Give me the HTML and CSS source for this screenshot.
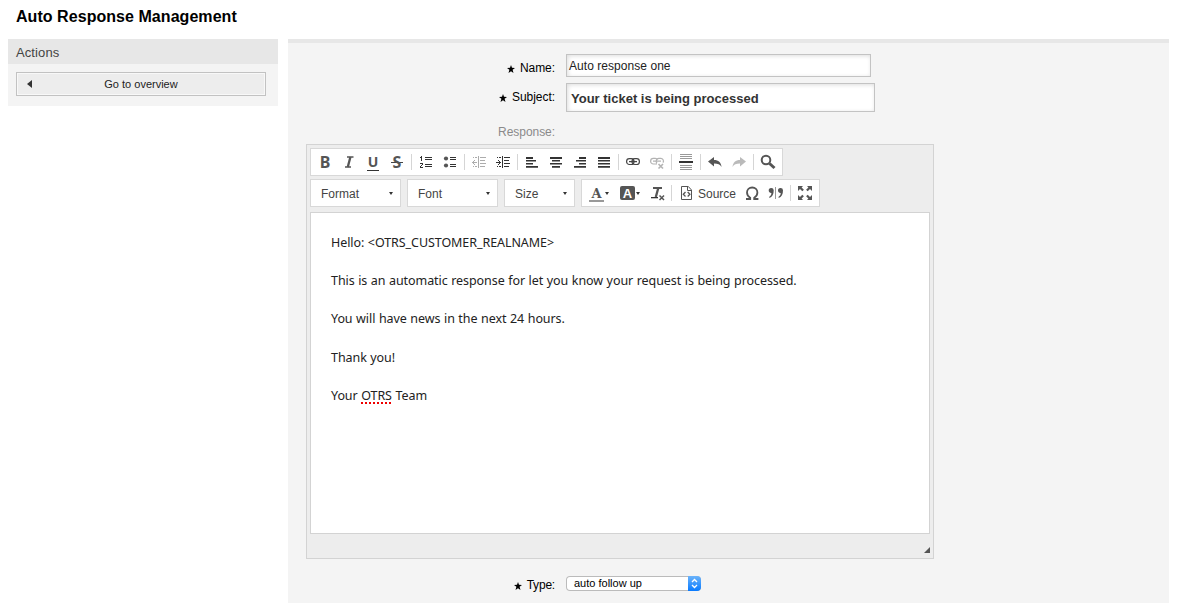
FILE: index.html
```html
<!DOCTYPE html>
<html lang="en">
<head>
<meta charset="utf-8">
<title>Auto Response Management</title>
<link rel="stylesheet" href="styles.css">
</head>
<body>
<h1 class="title"><span>Auto Response Management</span></h1>
<div class="layout">
  <aside class="sidebar">
    <h2 class="sidebar-head">Actions</h2>
    <a class="overview"><svg class="back" viewBox="0 0 5 8"><path d="M5 0v8L0 4z"/></svg><span>Go to overview</span></a>
  </aside>
  <main class="panel">
    <div class="row row-name">
      <label class="label"><svg class="star" viewBox="0 0 8 8"><path d="M4 0l1 2.8L8 3 5.6 4.8 6.5 8 4 6.2 1.5 8l.9-3.2L0 3l3-.2z"/></svg><span>Name:</span></label>
      <div class="input input-name"><span>Auto response one</span></div>
    </div>
    <div class="row row-subject">
      <label class="label"><svg class="star" viewBox="0 0 8 8"><path d="M4 0l1 2.8L8 3 5.6 4.8 6.5 8 4 6.2 1.5 8l.9-3.2L0 3l3-.2z"/></svg><span>Subject:</span></label>
      <div class="input input-subject"><span>Your ticket is being processed</span></div>
    </div>
    <div class="row row-response"><label class="label muted"><span>Response:</span></label></div>

    <div class="editor">
      <div class="toolbar first">
        <div class="group">
          <i class="tool"><span class="glyph">B</span></i>
          <i class="tool"><svg viewBox="0 0 16 16"><path class="s2" d="M6 3h6.500M4 13h6" stroke-width="1.600"/><path class="s2" d="M9.400 3L6.800 13" stroke-width="2.300"/></svg></i>
          <i class="tool"><span class="glyph under">U</span></i>
          <i class="tool"><span class="glyph strike">S</span></i>
          <b class="sep"></b>
          <i class="tool"><svg viewBox="0 0 16 16"><path class="k" d="M7 3h7v1H7zM7 5h7v1H7zM7 10h7v1H7zM7 12h7v1H7zM3 2h1v5H3zM2 3h1v1H2zM2 9h3v1H2zM4 10h1v1H4zM3 11h1v1H3zM2 12h1v1H2zM2 13h3v1H2z"/></svg></i>
          <i class="tool"><svg viewBox="0 0 16 16"><circle class="f" cx="4" cy="4.500" r="2.100"/><circle class="f" cx="4" cy="11.500" r="2.100"/><path class="k" d="M8 3h6v1H8zM8 5h6v1H8zM8 10h6v1H8zM8 12h6v1H8z"/></svg></i>
          <b class="sep"></b>
          <i class="tool off"><svg viewBox="0 0 16 16"><path class="k" d="M7 2h1v12H7zM9 3h6v1H9zM9 6h5v1H9zM9 9h6v1H9zM9 12h5v1H9zM1 8h5v1H1zM2 7h1v3H2zM3 6h1v1H3zM3 10h1v1H3zM2 3h1v1H2zM4 3h2v1H4zM2 12h1v1H2zM4 12h2v1H4z"/></svg></i>
          <i class="tool"><svg viewBox="0 0 16 16"><path class="k" d="M7 2h1v12H7zM9 3h6v1H9zM9 6h5v1H9zM9 9h6v1H9zM9 12h5v1H9zM1 8h5v1H1zM4 7h1v3H4zM3 6h1v1H3zM3 10h1v1H3zM2 3h1v1H2zM4 3h2v1H4zM2 12h1v1H2zM4 12h2v1H4z"/></svg></i>
          <b class="sep"></b>
          <i class="tool"><svg viewBox="0 0 16 16"><path class="k" d="M2 3h7v2H2zM2 6h10v1.500H2zM2 9h7v1.600H2zM2 12h12v1.800H2z"/></svg></i>
          <i class="tool"><svg viewBox="0 0 16 16"><path class="k" d="M2 3h12v2H2zM4 6h8v1.500H4zM2 9h12v1.600H2zM4 12h8v1.800H4z"/></svg></i>
          <i class="tool"><svg viewBox="0 0 16 16"><path class="k" d="M7 3h7v2H7zM4 6h10v1.500H4zM7 9h7v1.600H7zM2 12h12v1.800H2z"/></svg></i>
          <i class="tool"><svg viewBox="0 0 16 16"><path class="k" d="M2 3h12v2H2zM2 6h12v1.500H2zM2 9h12v1.600H2zM2 12h12v1.800H2z"/></svg></i>
          <b class="sep"></b>
          <i class="tool"><svg viewBox="0 0 16 16"><g class="l"><rect x="1.600" y="4.700" width="7.400" height="5.800" rx="2.800"/><rect x="7" y="4.700" width="7.400" height="5.800" rx="2.800"/><path d="M4 7.600h8" stroke-width="1.300"/></g></svg></i>
          <i class="tool off"><svg viewBox="0 0 16 16"><g class="l"><path d="M8 10H4.400a2.800 2.800 0 010-5.600h1.800a2.800 2.800 0 012.400 1.400M14 8.600a2.700 2.700 0 00-2.400-4.200H9.800A2.800 2.800 0 008 9.200M4 7.200h8"/><path d="M9.500 10l4.500 4.500M14 10l-4.500 4.500" stroke-width="1.600"/></g></svg></i>
          <b class="sep"></b>
          <i class="tool"><svg viewBox="0 0 16 16"><path class="thin" d="M2 0h12v1H2zM2 2h12v1H2zM2 4h12v1H2zM2 11h12v1H2zM2 13h12v1H2zM2 15h12v1H2z"/><path class="k" d="M1 7h14v2H1z"/></svg></i>
          <b class="sep"></b>
          <i class="tool"><svg viewBox="0 0 16 16"><path class="f" d="M1 7.500L7 3v3c4.500 0 7 2.200 7.500 7-1.500-2.600-3.500-3.500-7.500-3.500v3z"/></svg></i>
          <i class="tool off"><svg viewBox="0 0 16 16"><path class="f" d="M15 7.500L9 3v3c-4.500 0-7 2.200-7.500 7 1.500-2.600 3.500-3.500 7.500-3.500v3z"/></svg></i>
          <b class="sep"></b>
          <i class="tool"><svg viewBox="0 0 16 16"><circle class="s2" cx="6" cy="6" r="4.300" stroke-width="2"/><path class="s2" d="M9.500 9.500l5 4.500" stroke-width="3"/></svg></i>
        </div>
      </div>
      <div class="toolbar second">
        <div class="combo"><span>Format</span><em class="arrow"></em></div>
        <div class="combo"><span>Font</span><em class="arrow"></em></div>
        <div class="combo small"><span>Size</span><em class="arrow"></em></div>
        <div class="group">
          <i class="tool menu"><span class="glyph color">A</span><em class="arrow"></em></i>
          <i class="tool menu next"><span class="glyph fill">A</span><em class="arrow"></em></i>
          <i class="tool"><svg viewBox="0 0 16 16"><path class="s2" d="M4 3h9" stroke-width="2"/><path class="s2" d="M9.300 3L6.800 12" stroke-width="2.300"/><path class="k" d="M2 12h7v1.300H2z"/><path class="s2" d="M10.500 10.500l4.500 4.500M15 10.500L10.500 15" stroke-width="1.500"/></svg></i>
          <b class="sep"></b>
          <i class="tool source"><svg viewBox="0 0 16 16"><path class="s2" d="M3.500 1.500h6.800l3.200 3.500v9.500h-10zM9.500 1.500v4h4" stroke-width="1"/><path class="s2" d="M7.500 7L5.300 9.300l2.200 2.200M9.700 7l2.200 2.300-2.200 2.200" stroke-width="1.300"/></svg><span class="drop">Source</span></i>
          <i class="tool"><svg viewBox="0 0 16 16"><path class="s2" d="M2 14h4.200v-1.200C4 11.600 3 9.700 3 7.600 3 4.600 5.200 2.500 8.200 2.500s5.200 2.100 5.200 5.100c0 2.100-1 4-3.200 5.200V14h4.200" stroke-width="1.800"/></svg></i>
          <i class="tool"><svg viewBox="0 0 16 16"><path class="f" d="M.7 5.500a2.500 2.500 0 015-.2C5.800 9.500 4.300 12 1.300 13v-1.200c1.300-.8 2.100-2.100 2.100-3.800C2 8.200.7 7 .7 5.500zM10 5.500a2.500 2.500 0 015-.2c.1 4.200-1.400 6.700-4.400 7.700v-1.200c1.300-.8 2.100-2.100 2.100-3.800C11.300 8.200 10 7 10 5.500z"/><path class="thin" d="M7 2h1v12H7z"/></svg></i>
          <b class="sep"></b>
          <i class="tool"><svg viewBox="0 0 16 16"><path class="f" d="M1 1h5L4.600 2.400l2.300 2.300-1.600 1.600L3 4 1 6zM15 1h-5l1.400 1.400-2.300 2.300 1.600 1.600L13 4l2 2zM1 15h5l-1.400-1.400 2.300-2.300-1.600-1.600L3 12l-2-2zM15 15h-5l1.400-1.400-2.300-2.300 1.600-1.600L13 12l2-2z"/></svg></i>
        </div>
      </div>
      <div class="content">
        <p>Hello: &lt;OTRS_CUSTOMER_REALNAME&gt;</p>
        <p>This is an automatic response for let you know your request is being processed.</p>
        <p class="news">You will have news in the next 24 hours.</p>
        <p>Thank you!</p>
        <p>Your <span class="misspelled">OTRS</span> Team</p>
      </div>
      <div class="footer"><svg class="grip" viewBox="0 0 6 6"><path d="M6 0v6H0z"/></svg></div>
    </div>

    <div class="row row-type">
      <label class="label"><svg class="star" viewBox="0 0 8 8"><path d="M4 0l1 2.800L8 3 5.600 4.800 6.500 8 4 6.200 1.500 8l.9-3.200L0 3l3-.2z"/></svg><span>Type:</span></label>
      <div class="select"><span>auto follow up</span><b class="knob"><svg viewBox="0 0 13 15"><path d="M4 6l2.500-2.500L9 6M4 9l2.500 2.500L9 9"/></svg></b></div>
    </div>
  </main>
</div>
</body>
</html>
```
FILE: styles.css
```css
* { box-sizing: border-box; }
body { margin: 0; height: 603px; overflow: hidden; background: #fff; color: #000; font: 12px/16px "Liberation Sans", Arial, sans-serif; white-space: nowrap; }
svg { display: block; flex: none; }
.title { margin: 0; height: 39px; padding: 7px 0 0 16px; font-size: 16px; line-height: 20px; letter-spacing: .05px; }
.layout { display: flex; gap: 10px; align-items: flex-start; padding-left: 8px; }
.sidebar { width: 270px; height: 67px; background: #f4f4f4; }
.sidebar-head { margin: 0 0 8px; height: 25px; padding-left: 8px; background: #e7e7e7; color: #444; font-size: 13px; font-weight: normal; line-height: 27px; letter-spacing: .1px; }
.overview { display: flex; align-items: center; width: 250px; height: 24px; margin-left: 8px; border: 1px solid #c2c2c2; background: #ededed; box-shadow: inset 0 0 0 1px #f8f8f8; color: #222; font-size: 11px; }
.back { width: 5px; height: 8px; margin-left: 10px; fill: #333; }
.overview span { flex: 1; padding-right: 15px; text-align: center; }
.panel { width: 881px; height: 564px; border-top: 4px solid #e7e7e7; background: #f4f4f4; }

.row { display: flex; align-items: flex-start; gap: 11px; }
.label { display: flex; align-items: center; justify-content: flex-end; gap: 5px; width: 267px; height: 16px; letter-spacing: -.05px; }
.muted { color: #8a8a8a; }
.star { width: 8px; height: 8px; margin-top: 1px; }
.row-name { padding-top: 11px; height: 40px; }
.row-name .label { margin-top: 6px; }
.row-subject .label { margin-top: 6px; }
.row-response { margin-top: 12px; height: 20px; }
.input { border: 1px solid #c3c3c3; background: #fff; box-shadow: inset 1px 1px 4px #ddd; color: #222; }
.input-name { width: 305px; height: 23px; padding: 3px 0 0 2px; letter-spacing: .05px; }
.input-subject { width: 309px; height: 29px; padding: 7px 0 0 4px; color: #333; font-size: 13px; font-weight: bold; }

.editor { width: 628px; height: 415px; margin-left: 18px; padding: 3px; border: 1px solid #d3d3d3; background: #ededed; }
.toolbar { display: flex; gap: 6px; height: 28px; }
.first { margin-bottom: 3px; }
.second { margin-bottom: 5px; }
.group { display: flex; padding: 0 2px; border: 1px solid #d8d8d8; background: #fff; }
.tool { display: flex; align-items: center; justify-content: center; width: 24px; height: 26px; font-style: normal; }
.tool svg { width: 16px; height: 16px; }
.menu { width: 31px; justify-content: flex-start; padding-left: 4px; gap: 1px; }
.next { width: 30px; }
.source { width: 66px; justify-content: flex-start; padding-left: 4px; gap: 4px; color: #444; }
.drop { padding-top: 1px; }
.off { opacity: .4; }
.sep { width: 1px; height: 16px; margin: 5px 2px; background: #d5d5d5; }
.combo { display: flex; align-items: center; justify-content: space-between; width: 91px; padding: 1px 7px 0 10px; border: 1px solid #d8d8d8; background: #fff; color: #444; }
.small { width: 71px; }
.arrow { border: solid transparent; border-width: 3px 2.5px 0; border-top-color: #333; }
.glyph { color: #555; font: bold 16px/20px "Noto Sans", sans-serif; }
.under { height: 18px; margin-top: -1px; border-bottom: 1px solid #333; padding: 0 1px; font-size: 14px; line-height: 18px; }
.strike { padding: 0 2px; background: linear-gradient(#444, #444) 0 10px / 100% 1px no-repeat; }
.color { width: 15px; height: 17px; margin: 1px 0 0 1px; border-bottom: 2px solid #999; font: bold 13px/17px "DejaVu Serif", serif; text-align: center; }
.fill { width: 15px; height: 14px; margin: 0 0 0 1px; border-radius: 2px; background: #555; color: #fff; font: bold 13px/15px "Liberation Sans", sans-serif; text-align: center; }
.k { fill: #333; }
.f { fill: #555; }
.thin { fill: #999; }
.s2 { fill: none; stroke: #555; }
.l { fill: none; stroke: #444; stroke-width: 1.2; }

.content { height: 322px; padding: 19px 20px; border: 1px solid #d3d3d3; background: #fff; color: #222; font: 12.5px/21px "Noto Sans", sans-serif; letter-spacing: -.07px; word-spacing: .4px; }
.content p { height: 21px; margin: 0 0 17.3px; }
.content .news { margin: -1px 0 18.3px; }
.misspelled { text-decoration: underline dotted #e00 2px; text-underline-offset: 2px; }
.footer { display: flex; justify-content: flex-end; padding-top: 13px; }
.grip { width: 6px; height: 6px; fill: #555; }

.row-type { margin-top: 17px; }
.row-type .label { margin-top: 1px; letter-spacing: -.2px; }
.select { display: flex; align-items: center; justify-content: space-between; width: 135px; height: 15px; padding-left: 8px; overflow: hidden; border-radius: 4px; background: #fff; box-shadow: inset 0 0 0 1px #bbb; font-size: 11px; line-height: 15px; }
.knob { width: 13px; height: 15px; background: linear-gradient(#6bb3fa, #087aff); }
.knob svg { fill: none; stroke: #fff; stroke-width: 1.3; }
```
